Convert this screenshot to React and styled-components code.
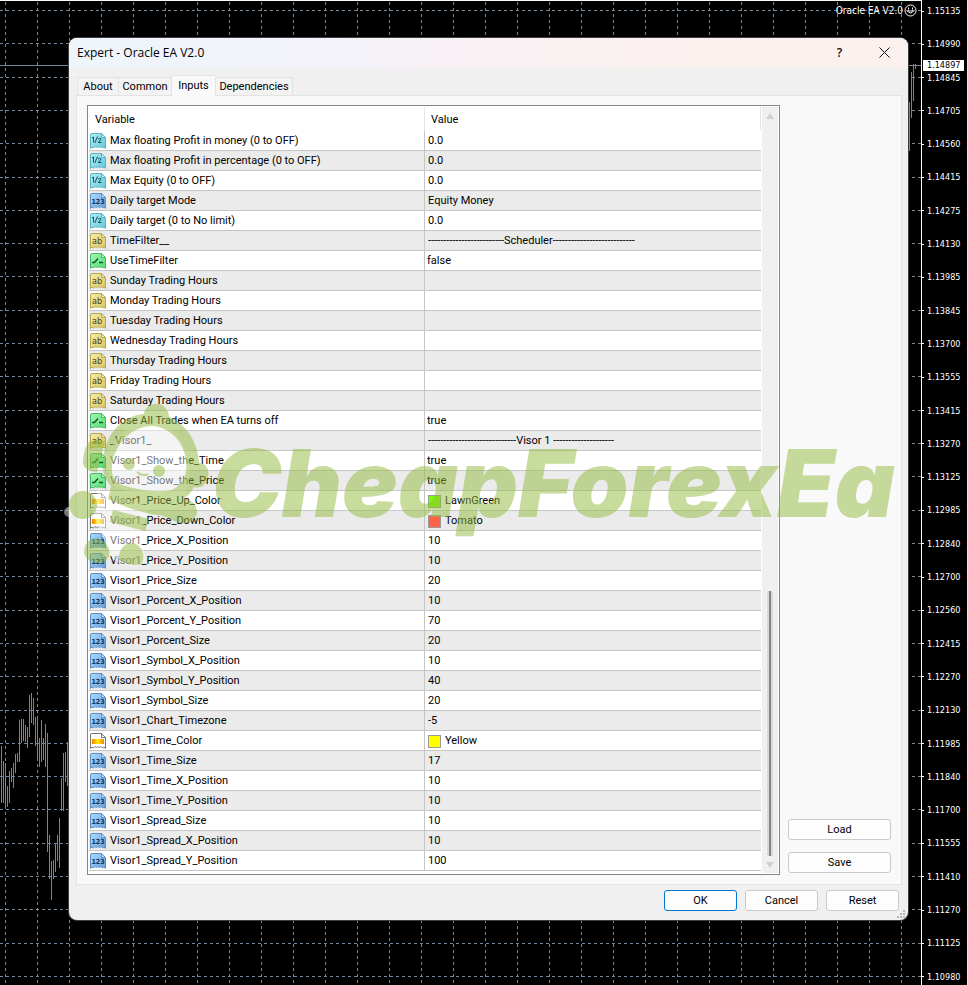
import { useState } from 'react';
import styled, { createGlobalStyle, css } from 'styled-components';

const GlobalStyle = createGlobalStyle`
  * { box-sizing: border-box; }
  body { margin: 0; background: #000; }
`;

const uiFont = "Roboto, 'Liberation Sans', sans-serif";
const axisFont = "'DejaVu Sans Condensed', 'DejaVu Sans', sans-serif";

const Screen = styled.main`
  display: flex; min-height: 100vh; background: #000; color: #000;
  font-family: ${uiFont}; font-size: 11px; line-height: 16px;
`;

const Chart = styled.section`
  position: relative; flex: 1; min-width: 0; padding: 38px 13px 65px 69px; overflow: hidden;
`;

const ChartSvg = styled.svg`
  position: absolute; left: 0; top: 0; width: 100%; height: 100%;
`;

const ExpertName = styled.div`
  position: absolute; right: 4px; top: 4px; display: flex; align-items: center; gap: 1px;
  color: #fff; font-family: ${axisFont}; font-size: 10px; line-height: 12px;
`;

const Axis = styled.aside`
  position: relative; flex: 0 0 47px; border-left: 1px solid #fff; border-right: 1px solid #e8e8e8;
`;

const AxisList = styled.ul`
  display: flex; flex-direction: column; justify-content: space-between; height: 100%;
  margin: 0; padding: 5px 0 2px; list-style: none;
  color: #fff; font-family: ${axisFont}; font-size: 9px; line-height: 12px;
`;

const AxisItem = styled.li`
  display: flex; align-items: center; gap: 3px;
  &::before { content: ''; width: 2px; height: 1px; background: #fff; }
`;

const PriceTag = styled.div`
  position: absolute; left: 1px; top: 60px; width: 41px; padding-left: 4px; background: #fff; color: #000;
  font-family: ${axisFont}; font-size: 9px; line-height: 11px;
`;

const Dialog = styled.section`
  position: relative; background: #f0f0f0; border-radius: 8px; box-shadow: 0 0 0 1px #3c3c3c;
`;

const TitleBar = styled.header`
  display: flex; align-items: center; height: 30px; padding: 0 16px 0 8px; border-radius: 8px 8px 0 0;
  background: linear-gradient(90deg, #eef5fb 0%, #f3f2fa 30%, #f8f0f3 50%, #faf0ee 75%);
`;

const Title = styled.h1`
  flex: 1; margin: 0; font-family: 'Open Sans', sans-serif; font-weight: 400; font-size: 12px; line-height: 16px;
`;

const TitleButton = styled.button`
  display: flex; align-items: center; justify-content: center; width: 15px; height: 26px; padding: 0 0 2px;
  margin-left: 30px; border: 0; background: none; color: #111;
  font-family: 'Open Sans', sans-serif; font-weight: 600; font-size: 12px;
`;

const Tabs = styled.div`
  display: flex; align-items: flex-end; height: 27px; padding: 0 8px;
`;

const Tab = styled.button`
  width: ${(p) => p.$width}px; height: 18px; padding: 1px 0 0; border: 1px solid #e3e3e3; border-bottom: 0; border-right: 0;
  background: #f3f3f3; color: #000; font-family: ${uiFont}; font-size: 11px; line-height: 16px; text-align: center;
  &:last-child { border-right: 1px solid #e3e3e3; }
  ${(p) => p.$active && css`
    position: relative; z-index: 1; height: 21px; margin-bottom: -1px; padding: 0 0 1px; background: #f9f9f9;
  `}
`;

const Page = styled.div`
  display: flex; gap: 8px; margin: 0 6px 0 7px; padding: 9px 10px 9px 10px; border: 1px solid #e3e3e3; background: #f9f9f9;
`;

const ListBox = styled.div`
  display: flex; flex: 1; min-width: 0; padding: 1px 1px 3px 1px; border: 1px solid #828790; background: #fff;
`;

const Table = styled.table`
  flex: 1; border-collapse: separate; border-spacing: 0; table-layout: fixed;
`;

const HeadCell = styled.th`
  width: ${(p) => (p.$first ? '50%' : 'auto')}; height: 24px; padding: 1px 6px 0;
  border-right: 1px solid #e5e5e5; font-weight: 400; text-align: left;
`;

const Row = styled.tr`
  background: ${(p) => (p.$odd ? '#ebebeb' : '#fff')};
`;

const Cell = styled.td`
  height: 20px; padding: 0 ${(p) => (p.$tight ? 2 : 3)}px; border-bottom: 1px solid #c6c6c6; white-space: nowrap;
  &:first-child { padding: 0 1px; border-right: 1px solid #c6c6c6; }
`;

const CellBody = styled.div`
  display: flex; align-items: center; gap: 4px; height: 19px; padding-top: 1px; overflow: hidden;
`;

const Swatch = styled.span`
  width: 13px; height: 13px; border: 1px solid #9a9a9a; background: ${(p) => p.$color};
`;

const ScrollBar = styled.div`
  display: flex; flex-direction: column; align-items: center; width: 16px; margin-left: 1px; margin-bottom: -2px; padding: 6px 0 5px; background: #f0f0f0;
`;

const Arrow = styled.span`
  border: 4px solid transparent; border-top-width: 0; border-bottom: 6px solid #d0d0d0;
  ${(p) => p.$down && css`transform: rotate(180deg);`}
`;

const Track = styled.div`
  display: flex; flex: 1; flex-direction: column; justify-content: flex-end; padding-bottom: 6px;
`;

const Thumb = styled.div`
  width: 6px; height: 36%; border: solid #d9d9d9; border-width: 0 2px; border-radius: 2px; background: #858585;
`;

const Side = styled.div`
  display: flex; flex: 0 0 103px; flex-direction: column; justify-content: flex-end; gap: 12px; padding-bottom: 2px;
`;

const Button = styled.button`
  min-width: 73px; height: 21px; padding: 1px 8px 0; border: 1px solid ${(p) => (p.$primary ? '#0078d4' : '#cacaca')};
  border-radius: 3px; background: #fdfdfd; color: #000; font-family: ${uiFont}; font-size: 11px; line-height: 16px;
`;

const Footer = styled.footer`
  display: flex; justify-content: flex-end; gap: 8px; padding: 5px 9px 9px;
`;

const Grip = styled.svg`
  position: absolute; right: 3px; bottom: 2px;
`;

const Watermark = styled.div`
  position: absolute; left: -5px; top: 362px; display: flex; pointer-events: none;
`;

const WatermarkText = styled.div`
  padding-top: 28px; color: rgba(145, 185, 60, 0.5); white-space: nowrap;
  font-family: Inter, sans-serif; font-weight: 900; font-style: italic; font-size: 93px; line-height: 110px;
`;

const axisPrices = [
  '1.15135', '1.14990', '1.14845', '1.14705', '1.14560', '1.14415', '1.14275', '1.14130', '1.13985', '1.13845',
  '1.13700', '1.13555', '1.13415', '1.13270', '1.13125', '1.12985', '1.12840', '1.12700', '1.12560', '1.12415',
  '1.12270', '1.12130', '1.11985', '1.11840', '1.11700', '1.11555', '1.11410', '1.11270', '1.11125', '1.10980',
];

// [x, high, low]
const bars = [
  [1, 746, 803], [3, 761, 803], [5, 763, 809], [7, 786, 807], [9, 771, 803], [11, 768, 782], [13, 763, 788],
  [15, 754, 773], [17, 753, 762], [19, 720, 762], [21, 719, 743], [23, 719, 741], [25, 725, 742], [27, 727, 748],
  [29, 695, 737], [31, 693, 723], [33, 698, 725], [35, 717, 746], [37, 718, 758], [39, 738, 767], [41, 720, 762],
  [43, 738, 760], [45, 724, 767], [47, 733, 852], [49, 835, 879], [51, 861, 900], [53, 860, 879], [55, 843, 872],
  [57, 835, 861], [59, 818, 868], [61, 778, 811], [63, 753, 811], [65, 752, 782], [67, 742, 786],
  [909, 102, 151], [911, 72, 118], [913, 64, 101], [915, 64, 69],
];

const rows = [
  ['double', 'Max floating Profit in money (0 to OFF)', '0.0'],
  ['double', 'Max floating Profit in percentage (0 to OFF)', '0.0'],
  ['double', 'Max Equity (0 to OFF)', '0.0'],
  ['int', 'Daily target Mode', 'Equity Money'],
  ['double', 'Daily target (0 to No limit)', '0.0'],
  ['string', 'TimeFilter__', '-------------------------Scheduler---------------------------'],
  ['bool', 'UseTimeFilter', 'false'],
  ['string', 'Sunday Trading Hours', ''],
  ['string', 'Monday Trading Hours', ''],
  ['string', 'Tuesday Trading Hours', ''],
  ['string', 'Wednesday Trading Hours', ''],
  ['string', 'Thursday Trading Hours', ''],
  ['string', 'Friday Trading Hours', ''],
  ['string', 'Saturday Trading Hours', ''],
  ['bool', 'Close All Trades when EA turns off', 'true'],
  ['string', '_Visor1_', '-----------------------------Visor 1 --------------------'],
  ['bool', 'Visor1_Show_the_Time', 'true'],
  ['bool', 'Visor1_Show_the_Price', 'true'],
  ['color', 'Visor1_Price_Up_Color', 'LawnGreen'],
  ['color', 'Visor1_Price_Down_Color', 'Tomato'],
  ['int', 'Visor1_Price_X_Position', '10'],
  ['int', 'Visor1_Price_Y_Position', '10'],
  ['int', 'Visor1_Price_Size', '20'],
  ['int', 'Visor1_Porcent_X_Position', '10'],
  ['int', 'Visor1_Porcent_Y_Position', '70'],
  ['int', 'Visor1_Porcent_Size', '20'],
  ['int', 'Visor1_Symbol_X_Position', '10'],
  ['int', 'Visor1_Symbol_Y_Position', '40'],
  ['int', 'Visor1_Symbol_Size', '20'],
  ['int', 'Visor1_Chart_Timezone', '-5'],
  ['color', 'Visor1_Time_Color', 'Yellow'],
  ['int', 'Visor1_Time_Size', '17'],
  ['int', 'Visor1_Time_X_Position', '10'],
  ['int', 'Visor1_Time_Y_Position', '10'],
  ['int', 'Visor1_Spread_Size', '10'],
  ['int', 'Visor1_Spread_X_Position', '10'],
  ['int', 'Visor1_Spread_Y_Position', '100'],
];

const iconStyles = {
  double: { fill: 'url(#icon-double)', stroke: '#58b4c4', ink: '#0b5566' },
  int: { fill: 'url(#icon-int)', stroke: '#5a92c8', ink: '#0a3568' },
  string: { fill: 'url(#icon-string)', stroke: '#b8a64c', ink: '#4c4310' },
  bool: { fill: 'url(#icon-bool)', stroke: '#44bb62', ink: '#0c5a26' },
  color: { fill: '#fff', stroke: '#777', ink: '#777' },
};

const gradients = [
  ['double', '#b5eef4', '#62c8d8'],
  ['int', '#b4dafa', '#5f9edc'],
  ['string', '#f6edaa', '#d8c460'],
  ['bool', '#a8f5b4', '#4fdc74'],
];

const Defs = styled.svg`
  position: absolute; width: 0; height: 0;
`;

function IconGradients() {
  return (
    <Defs aria-hidden>
      <defs>
        {gradients.map(([name, from, to]) => (
          <linearGradient key={name} id={`icon-${name}`} x1="0" y1="0" x2="1" y2="1">
            <stop offset="0" stopColor={from} />
            <stop offset="1" stopColor={to} />
          </linearGradient>
        ))}
        <linearGradient id="icon-amber">
          <stop offset="0" stopColor="#ff8000" />
          <stop offset=".5" stopColor="#fff000" />
          <stop offset="1" stopColor="#ff8000" />
        </linearGradient>
      </defs>
    </Defs>
  );
}

function TypeIcon({ type }) {
  const s = iconStyles[type];
  return (
    <svg width="16" height="16" viewBox="0 0 16 16" aria-hidden>
      <path
        d="M.5 2Q.5.5 2 .5H11.5L15.5 4.5V15.5L14 14L12.5 15L11 13.5L9.5 14.5L8 13.5L6.5 14.5L5 13.5L3.5 15L2 14L.5 15.5Z"
        fill={s.fill} stroke={s.stroke}
      />
      <path d="M11.5.5V4.5H15.5Z" fill="#fff" fillOpacity=".55" stroke={s.stroke} />
      {type === 'double' && (
        <path d="M2 5L3.5 4V9.5M7.5 3.5L4.8 10M8 6Q9.5 4.6 11 6Q11.2 7 8 9.5H11.5" fill="none" stroke={s.ink} />
      )}
      {type === 'int' && (
        <text x="8" y="11" textAnchor="middle" fontFamily="DejaVu Sans Condensed, sans-serif" fontWeight="700" fontSize="7" fill={s.ink}>123</text>
      )}
      {type === 'string' && (
        <text x="7" y="11" textAnchor="middle" fontFamily="DejaVu Sans Condensed, sans-serif" fontSize="9" fill={s.ink}>ab</text>
      )}
      {type === 'bool' && <path d="M2 9.5H4.5L8 5.5M9 9.5H13" fill="none" stroke={s.ink} strokeWidth="1.4" />}
      {type === 'color' && <rect x="2" y="6" width="12" height="5" fill="url(#icon-amber)" />}
    </svg>
  );
}

function ChartBackground() {
  return (
    <ChartSvg aria-hidden shapeRendering="crispEdges">
      <defs>
        <pattern id="grid-v" width="32" height="6" patternUnits="userSpaceOnUse">
          <rect x="5" y="2" width="1" height="3" fill="#778899" />
        </pattern>
      </defs>
      <rect width="100%" height="100%" fill="url(#grid-v)" />
      {axisPrices.map((price, i) => {
        const y = Math.round(10 + i * 33.31) + 0.5;
        return <line key={price} x1="0" x2="100%" y1={y} y2={y} stroke="#778899" strokeDasharray="3 3" />;
      })}
      <line x1="0" x2="100%" y1="65.5" y2="65.5" stroke="#778899" />
      {bars.map(([x, high, low]) => <rect key={x} x={x} y={high} width="1" height={low - high} fill="#00e000" />)}
      <rect width="100%" height="1" fill="#f4fff4" />
    </ChartSvg>
  );
}

function Mascot() {
  return (
    <svg width="148" height="170" viewBox="64 400 148 170" aria-hidden>
      <g fill="#fff" opacity=".45">
        <path d="M108 466C106 438 132 420 158 424C184 430 196 460 186 490C160 500 128 494 110 484Z" />
        <path d="M98 490L150 506L140 536L146 560Q126 572 112 558L92 512Z" />
        <circle cx="69" cy="512" r="5" />
      </g>
      <g opacity=".5" fill="#91b93c">
        <path
          fillRule="evenodd"
          d="M103 466C102 438 120 416 144 414C146 400 168 400 169 417C186 424 198 442 199 463C206 463 210 470 208 477C206 485 201 489 194 487C191 493 188 496 184 498Q198 502 197 514Q190 528 174 521Q166 516 158 515Q134 512 108 499L111 486C105 479 103 473 103 466ZM112 466C111 476 115 482 122 485C138 490 156 493 172 490C183 484 188 474 186 460C184 442 170 427 152 426C132 426 114 444 112 466Z"
        />
        <path d="M88 443Q93 439 105 441L97 472Q85 471 83 464Q83 451 88 443Z" />
        <circle cx="129" cy="464" r="6" />
        <circle cx="159" cy="471" r="6" />
        <path d="M137 472Q142 477 148 474" fill="none" stroke="#91b93c" strokeWidth="2" />
        <circle cx="83" cy="505" r="14" />
        <path d="M113 510L149 519L145 531L110 522Z" />
        <path d="M84 553C84 540 94 535 103 541C112 547 111 560 102 563C92 564 86 560 84 553Z" />
        <path d="M119 560C118 550 124 543 133 543C143 545 146 558 141 564Q130 567 119 560Z" />
      </g>
    </svg>
  );
}

const tabs = [['About', 41], ['Common', 53], ['Inputs', 44], ['Dependencies', 78]];

export default function App() {
  const [active, setActive] = useState('Inputs');
  return (
    <Screen>
      <GlobalStyle />
      <IconGradients />
      <Chart>
        <ChartBackground />
        <ExpertName>
          Oracle EA V2.0
          <svg width="13" height="13" viewBox="0 0 13 13" fill="none" stroke="#fff" aria-hidden>
            <circle cx="6.5" cy="6.5" r="5.5" />
            <path d="M3.5 7Q6.5 11 9.5 7Z" />
            <path d="M4.5 3.5V5.5M8.5 3.5V5.5" />
          </svg>
        </ExpertName>
        <Dialog role="dialog" aria-labelledby="expert-title">
          <TitleBar>
            <Title id="expert-title">Expert - Oracle EA V2.0</Title>
            <TitleButton aria-label="Help">?</TitleButton>
            <TitleButton aria-label="Close">
              <svg width="11" height="11" viewBox="0 0 11 11" stroke="#111" aria-hidden><path d="M.5.5L10.5 10.5M10.5.5L.5 10.5" /></svg>
            </TitleButton>
          </TitleBar>
          <Tabs role="tablist">
            {tabs.map(([name, width]) => (
              <Tab key={name} role="tab" aria-selected={name === active} $active={name === active} $width={width} onClick={() => setActive(name)}>
                {name}
              </Tab>
            ))}
          </Tabs>
          <Page role="tabpanel">
            <ListBox>
              <Table>
                <thead>
                  <tr>
                    <HeadCell $first>Variable</HeadCell>
                    <HeadCell>Value</HeadCell>
                  </tr>
                </thead>
                <tbody>
                  {rows.map(([type, name, value], i) => (
                    <Row key={name} $odd={i % 2 === 1}>
                      <Cell>
                        <CellBody><TypeIcon type={type} />{name}</CellBody>
                      </Cell>
                      <Cell $tight={type === 'bool'}>
                        <CellBody>{type === 'color' && <Swatch $color={value} />}{value}</CellBody>
                      </Cell>
                    </Row>
                  ))}
                </tbody>
              </Table>
              <ScrollBar aria-hidden>
                <Arrow />
                <Track><Thumb /></Track>
                <Arrow $down />
              </ScrollBar>
            </ListBox>
            <Side>
              <Button>Load</Button>
              <Button>Save</Button>
            </Side>
          </Page>
          <Footer>
            <Button $primary>OK</Button>
            <Button>Cancel</Button>
            <Button>Reset</Button>
          </Footer>
          <Grip width="8" height="8" viewBox="0 0 8 8" fill="#b8b8b8" aria-hidden>
            <path d="M6 0h2v2h-2zM3 3h2v2h-2zM6 3h2v2h-2zM0 6h2v2h-2zM3 6h2v2h-2zM6 6h2v2h-2z" />
          </Grip>
          <Watermark>
            <Mascot />
            <WatermarkText>CheapForexEa</WatermarkText>
          </Watermark>
        </Dialog>
      </Chart>
      <Axis>
        <AxisList>
          {axisPrices.map((price) => <AxisItem key={price}>{price}</AxisItem>)}
        </AxisList>
        <PriceTag>1.14897</PriceTag>
      </Axis>
    </Screen>
  );
}
